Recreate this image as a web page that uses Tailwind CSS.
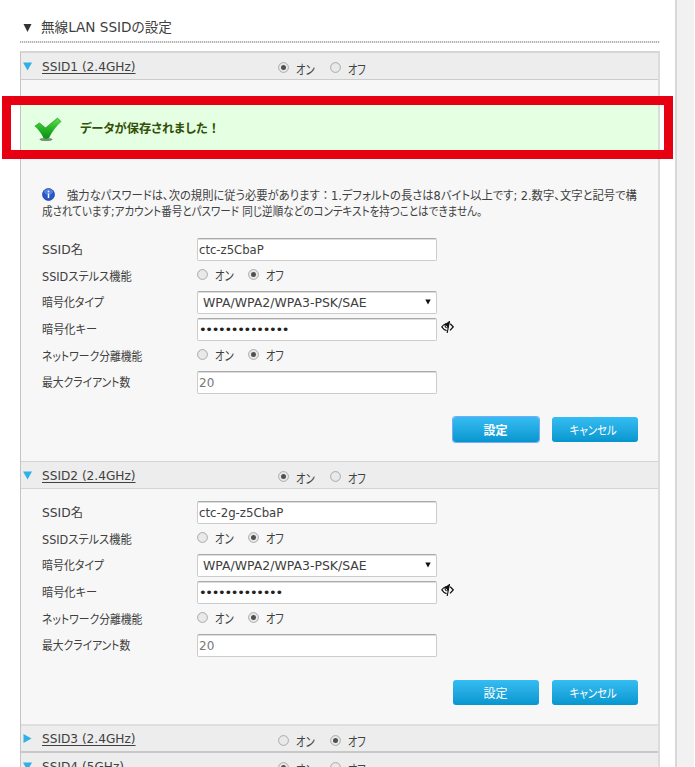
<!DOCTYPE html>
<html lang="ja">
<head>
<meta charset="utf-8">
<title>無線LAN SSIDの設定</title>
<script src="https://cdn.jsdelivr.net/npm/@tailwindcss/browser@4"></script>
</head>
<body class="bg-white">
<div class="relative flex h-[767px] w-[695px] overflow-hidden bg-white font-['DejaVu_Sans','Noto_Sans_CJK_JP',sans-serif] text-[12px] leading-4 text-[#404040] [font-feature-settings:'palt']">
  <main class="w-[675px] shrink-0 pl-5 pr-[15px]">
    <div class="flex h-[41px] items-center pl-[3px] pt-[14px]">
      <svg class="mr-[9px] h-[9px] w-[9px]" viewBox="0 0 9 9"><path d="M.5 1h8L4.500 9z" fill="#333"/></svg>
      <h1 class="-mt-px whitespace-nowrap text-[14px]"><span data-w="131" class="inline-block origin-left">無線LAN SSIDの設定</span></h1>
    </div>
    <div class="h-[2px] w-full bg-[repeating-linear-gradient(90deg,#b4b4b4_0_1px,#ececec_1px_2px)]"></div>
    <div id="panel" class="mt-2 h-[730px] border-l border-r-2 border-t-2 border-l-[#c4c4c4] border-r-[#dcdcdc] border-t-[#d6d6d6] bg-[#f7f7f7]"></div>
  </main>
  <aside class="w-[19px] border-l-2 border-[#d8d8d8] bg-[#f1f1f1]"></aside>
  <div class="absolute left-[2px] top-[96px] h-[63px] w-[671px] border-[9px] border-[#e60012]"></div>
</div>

<template id="tpl-head">
  <div class="flex items-center bg-[#ededed] pl-[3px]">
    <svg data-tri class="-ml-px h-[9px] w-[9px]" viewBox="0 0 9 9"><path fill="#2fb0e6"/></svg>
    <span class="ml-[10px] w-[236px] whitespace-nowrap pt-px"><span data-name class="inline-block origin-left underline underline-offset-2"></span></span>
    <span data-radios class="flex pt-[6px]"></span>
  </div>
</template>
<template id="tpl-radio">
  <span class="flex w-[51.500px] items-center gap-[7px]">
    <svg class="-mt-[3px] h-[11px] w-[11px]" viewBox="0 0 11 11"><circle cx="5.500" cy="5.500" r="4.900" fill="#e9e9e9" stroke="#a9a9a9" stroke-width="1"/><circle data-dot cx="5.500" cy="5.500" r="2.500" fill="#505050"/></svg>
    <span class="whitespace-nowrap pt-px text-[13px]"><span data-label class="inline-block origin-left"></span></span>
  </span>
</template>
<template id="tpl-row">
  <div class="flex h-[26.600px] items-center">
    <span class="w-[154.500px] shrink-0 whitespace-nowrap pt-[2px]"><span data-label class="inline-block origin-left"></span></span>
    <span data-field class="flex items-center"></span>
  </div>
</template>
<template id="tpl-input">
  <span class="flex h-[23px] w-[240.500px] items-center whitespace-nowrap rounded-[2px] border border-[#ccc] border-t-[#aaa] bg-white pl-[1.500px] pt-px shadow-[inset_0_1px_0_#ddd]"><span data-value class="inline-block origin-left"></span></span>
</template>
<template id="tpl-select">
  <span class="flex h-[23px] w-[240.500px] items-center justify-between whitespace-nowrap rounded-[2px] border border-[#ccc] border-t-[#aaa] bg-white pl-[5px] pr-[5px] pt-px shadow-[inset_0_1px_0_#ddd]"><span data-value class="inline-block origin-left"></span><svg class="-mt-px h-[6px] w-[6px]" viewBox="0 0 6 6"><path d="M.3 .5h5.400L3 5.500z" fill="#111"/></svg></span>
</template>
<template id="tpl-eye">
  <svg class="-mt-[4px] ml-[4px] h-[14px] w-[13px]" viewBox="0 0 13 14" fill="none" stroke="#111"><path d="M5 3.800C3.300 4.200 1.800 5.300.8 6.900 2 8.900 3.600 10.100 5.600 10.600" stroke-width="1.100"/><path d="M9.200 3.800l3 3.100-3.200 3.500" stroke-width="1.300"/><path d="M8.500 1L6.200 13" stroke-width="1.100"/><path d="M3 4.500L8.700 1 7.300 8C5.500 9 3.300 7.500 3.600 5.500z" fill="#111" stroke="none"/><path d="M4.800 5.600l1.200 2" stroke="#fff" stroke-width="1"/></svg>
</template>
<template id="tpl-alert">
  <div class="mt-[25px] flex h-[45px] items-center bg-[#e4ffe2] pl-[13px]">
    <svg class="mt-[4px] h-[25px] w-[28px]" viewBox="0 0 28 25"><defs><linearGradient id="g" x1="0" y1="0" x2="0" y2="1"><stop offset="0" stop-color="#6be060"/><stop offset=".45" stop-color="#2cbb2b"/><stop offset="1" stop-color="#0a8d14"/></linearGradient></defs><ellipse cx="12" cy="22.500" rx="6.500" ry="1.600" fill="#49614a" opacity=".7"/><path d="M.5 9L5.500 5.500 11.500 10.500 23.500 .5 27.500 4.500C22 9.500 18 14.500 15 21Q12 22.500 9.500 21C7.500 16.500 4.500 12.500.5 9z" fill="url(#g)"/><path d="M1.500 9L5.500 6.300 11.500 11.400 23.500 1.400 26.700 4.500" stroke="#3c9c3a" stroke-width=".7" fill="none"/></svg>
    <b class="ml-[18px] mt-[3px] whitespace-nowrap text-[12.500px] text-[#334f08]"><span data-w="140" class="inline-block origin-left">データが保存されました<span class="[font-feature-settings:normal]">！</span></span></b>
  </div>
  <div class="flex h-[89px] flex-col pl-[21px] pt-[38px] text-[12px] leading-4">
    <div class="flex items-center whitespace-nowrap"><svg class="-mt-[3px] mr-[12px] h-[13px] w-[13px] shrink-0" viewBox="0 0 13 13"><circle cx="6.500" cy="6.500" r="6" fill="#2858c8" stroke="#1a3c9c" stroke-width=".7"/><ellipse cx="6.500" cy="3.800" rx="4.400" ry="2.800" fill="#6f9bf0" opacity=".6"/><path d="M6.500 5.500v4.500M6.500 2.700v1.500" stroke="#fff" stroke-width="1.500"/></svg><span data-w="570" class="inline-block shrink-0 origin-left">強力なパスワードは、次の規則に従う必要があります<span class="[font-feature-settings:normal]">：</span>1.デフォルトの長さは8バイト以上です; 2.数字、文字と記号で構</span></div>
    <div class="whitespace-nowrap"><span data-w="440" class="inline-block origin-left">成されています;アカウント番号とパスワード 同じ逆順などのコンテキストを持つことはできません。</span></div>
  </div>
</template>
<template id="tpl-buttons">
  <div class="flex items-center justify-end gap-[13px] pr-[20.500px] text-white">
    <button data-save class="h-[25px] w-[86px] rounded-[3px] bg-gradient-to-b from-[#34bdf3] to-[#0496cf] pt-[2px] text-[12px]">設定</button>
    <button class="h-[25px] w-[86px] whitespace-nowrap rounded-[3px] bg-gradient-to-b from-[#34bdf3] to-[#0496cf] pr-[2px] pt-[2px] text-[12px]"><span data-w="47" class="inline-block origin-center">キャンセル</span></button>
  </div>
</template>
<script>
const get = id => document.getElementById('tpl-' + id).content.cloneNode(true);
const panel = document.getElementById('panel');
const text = (el, value, width) => { el.textContent = value; if (width) el.dataset.w = width; };

function radios(on) {
  const f = document.createDocumentFragment();
  [['オン', 19, on], ['オフ', 18, !on]].forEach(([label, width, picked]) => {
    const r = get('radio');
    text(r.querySelector('[data-label]'), label, width);
    if (!picked) r.querySelector('[data-dot]').remove();
    f.append(r);
  });
  return f;
}
function header(name, open, on, cls, width) {
  const h = get('head');
  h.firstElementChild.className += ' ' + cls;
  h.querySelector('path').setAttribute('d', open ? 'M0 .5h9L4.500 8.500z' : 'M.5 0L8.500 4.500.5 9z');
  text(h.querySelector('[data-name]'), name, width);
  h.querySelector('[data-radios]').append(radios(on));
  panel.append(h);
}
function row(box, label, width, ...field) {
  const r = get('row');
  text(r.querySelector('[data-label]'), label, width);
  r.querySelector('[data-field]').append(...field);
  box.append(r);
}
function box(kind, value, width, cls) {
  const b = get(kind), v = b.querySelector('[data-value]');
  text(v, value, width);
  if (cls) v.className += ' ' + cls;
  return b;
}
function form(ssid, ssidWidth, key, cls) {
  const d = document.createElement('div');
  d.className = 'pl-[21px] ' + cls;
  row(d, 'SSID名', 41, box('input', ssid, ssidWidth));
  row(d, 'SSIDステルス機能', 90, radios(false));
  row(d, '暗号化タイプ', 62, box('select', 'WPA/WPA2/WPA3-PSK/SAE', 164));
  row(d, '暗号化キー', 55, box('input', key, 0, 'pt-px text-[13px] tracking-[-1.300px] text-[#222]'), get('eye'));
  row(d, 'ネットワーク分離機能', 100, radios(false));
  row(d, '最大クライアント数', 88, box('input', '20', 15, 'text-[#777]'));
  panel.append(d);
}
function buttons(cls, focused) {
  const b = get('buttons');
  b.firstElementChild.className += ' ' + cls;
  if (focused) b.querySelector('[data-save]').className += ' font-bold ring-1 ring-[#79a9f8]';
  panel.append(b);
}

header('SSID1 (2.4GHz)', true, true, 'h-[27px] border-b border-[#ccc]', 94);
panel.append(get('alert'));
form('ctc-z5CbaP', 65, '•'.repeat(14), 'h-[160px] -mt-[3px]');
buttons('mt-[21px] h-[25px]', true);
header('SSID2 (2.4GHz)', true, true, 'mt-[19px] h-[28px] border-y border-[#d4d4d4]', 94);
form('ctc-2g-z5CbaP', 84, '•'.repeat(13), 'h-[160px] mt-[10px]');
buttons('mt-[21px] h-[25px]', false);
header('SSID3 (2.4GHz)', false, false, 'mt-[19px] h-[27px] border-t-2 border-[#dfdfdf]', 94);
header('SSID4 (5GHz)', true, true, 'h-[28px] border-t-2 border-[#c8c8c8]', 82);

const fit = el => { if (el.offsetWidth) el.style.transform = 'scaleX(' + el.dataset.w / el.offsetWidth + ')'; };
const watcher = new ResizeObserver(list => list.forEach(e => fit(e.target)));
document.querySelectorAll('[data-w]').forEach(el => watcher.observe(el));
</script>
</body>
</html>
